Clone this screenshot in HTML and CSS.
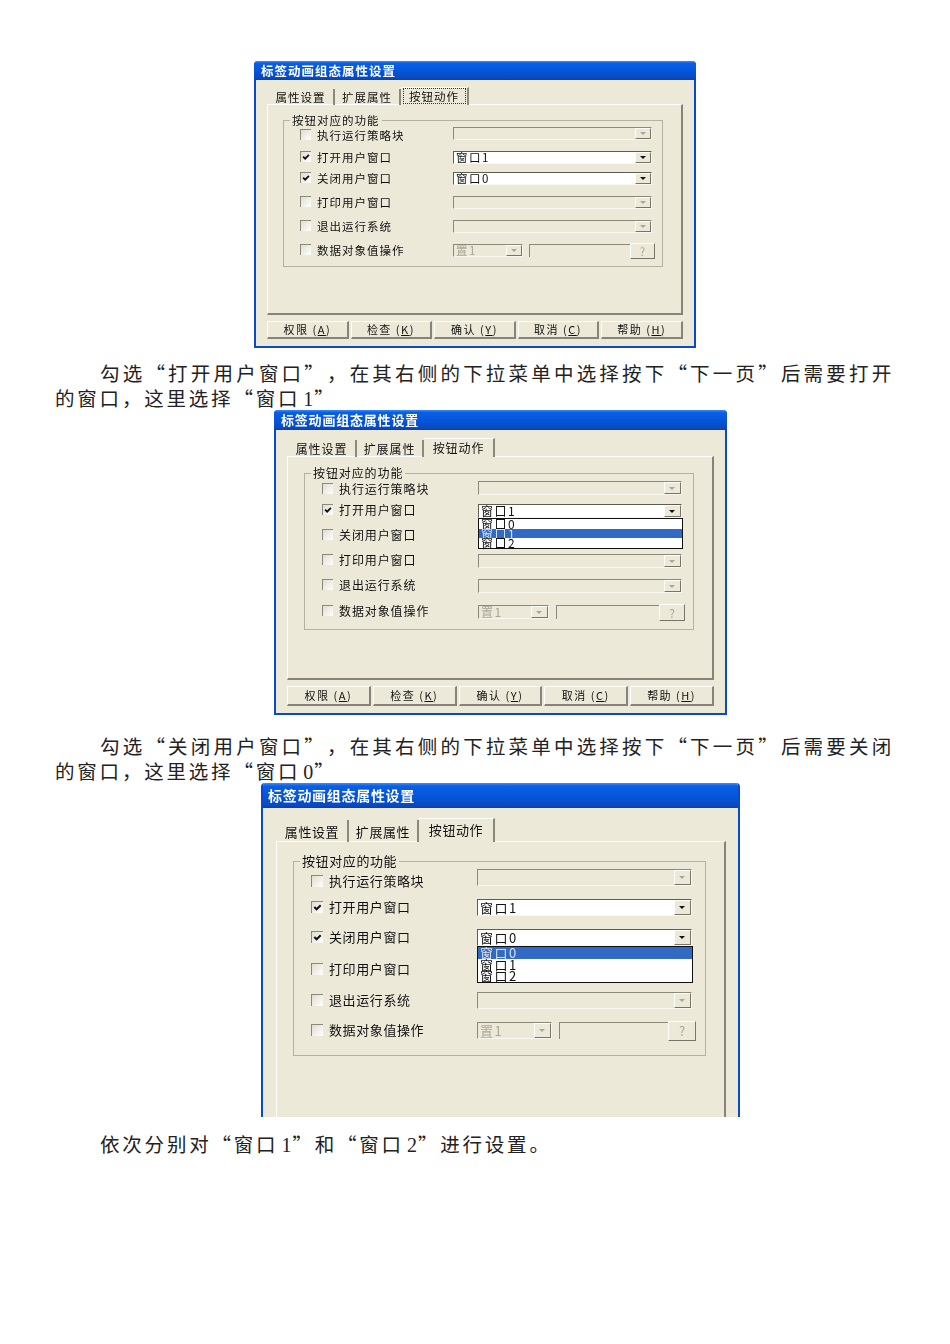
FILE: index.html
```html
<!DOCTYPE html>
<html lang="zh-CN">
<head>
<meta charset="utf-8">
<title>标签动画组态属性设置</title>
<link rel="stylesheet" href="styles.css">
</head>
<body>
<main class="page">

<section class="dialog d1">
  <div class="title">标签动画组态属性设置</div>
  <div class="tabs">
    <div class="tab">属性设置</div>
    <div class="tab">扩展属性</div>
    <div class="tab active"><span class="focus">按钮动作</span></div>
  </div>
  <div class="panel">
    <div class="group">
      <div class="legend">按钮对应的功能</div>
      <div class="row"><div class="opt"><span class="cb"></span>执行运行策略块</div><div class="combo off"><span class="val"></span><span class="arrow"></span></div></div>
      <div class="row"><div class="opt"><span class="cb"><svg viewBox="0 0 12 12"><path d="M2.5 5.5 5 8l4.5-4.5" /></svg></span>打开用户窗口</div><div class="combo"><span class="val">窗口1</span><span class="arrow"></span></div></div>
      <div class="row"><div class="opt"><span class="cb"><svg viewBox="0 0 12 12"><path d="M2.5 5.5 5 8l4.5-4.5" /></svg></span>关闭用户窗口</div><div class="combo"><span class="val">窗口0</span><span class="arrow"></span></div></div>
      <div class="row"><div class="opt"><span class="cb"></span>打印用户窗口</div><div class="combo off"><span class="val"></span><span class="arrow"></span></div></div>
      <div class="row"><div class="opt"><span class="cb"></span>退出运行系统</div><div class="combo off"><span class="val"></span><span class="arrow"></span></div></div>
      <div class="row"><div class="opt"><span class="cb"></span>数据对象值操作</div><div class="combo off short"><span class="val">置1</span><span class="arrow"></span></div><div class="field"></div><div class="qbtn">?</div></div>
    </div>
  </div>
  <div class="buttons">
    <div class="btn">权限 (<u>A</u>)</div>
    <div class="btn">检查 (<u>K</u>)</div>
    <div class="btn">确认 (<u>Y</u>)</div>
    <div class="btn">取消 (<u>C</u>)</div>
    <div class="btn">帮助 (<u>H</u>)</div>
  </div>
</section>

<p class="para p1">勾选“打开用户窗口”，在其右侧的下拉菜单中选择按下“下一页”后需要打开的窗口，这里选择“窗口<span class="num"> 1</span>”</p>

<section class="dialog d2">
  <div class="title">标签动画组态属性设置</div>
  <div class="tabs">
    <div class="tab">属性设置</div>
    <div class="tab">扩展属性</div>
    <div class="tab active">按钮动作</div>
  </div>
  <div class="panel">
    <div class="group">
      <div class="legend">按钮对应的功能</div>
      <div class="row"><div class="opt"><span class="cb"></span>执行运行策略块</div><div class="combo off"><span class="val"></span><span class="arrow"></span></div></div>
      <div class="row"><div class="opt"><span class="cb"><svg viewBox="0 0 12 12"><path d="M2.5 5.5 5 8l4.5-4.5" /></svg></span>打开用户窗口</div><div class="combo"><span class="val">窗口1</span><span class="arrow"></span>
        <div class="list"><div>窗口0</div><div class="sel">窗口1</div><div>窗口2</div></div></div></div>
      <div class="row"><div class="opt"><span class="cb"></span>关闭用户窗口</div><div class="combo off"><span class="val"></span><span class="arrow"></span></div></div>
      <div class="row"><div class="opt"><span class="cb"></span>打印用户窗口</div><div class="combo off"><span class="val"></span><span class="arrow"></span></div></div>
      <div class="row"><div class="opt"><span class="cb"></span>退出运行系统</div><div class="combo off"><span class="val"></span><span class="arrow"></span></div></div>
      <div class="row"><div class="opt"><span class="cb"></span>数据对象值操作</div><div class="combo off short"><span class="val">置1</span><span class="arrow"></span></div><div class="field"></div><div class="qbtn">?</div></div>
    </div>
  </div>
  <div class="buttons">
    <div class="btn">权限 (<u>A</u>)</div>
    <div class="btn">检查 (<u>K</u>)</div>
    <div class="btn">确认 (<u>Y</u>)</div>
    <div class="btn">取消 (<u>C</u>)</div>
    <div class="btn">帮助 (<u>H</u>)</div>
  </div>
</section>

<p class="para p2">勾选“关闭用户窗口”，在其右侧的下拉菜单中选择按下“下一页”后需要关闭的窗口，这里选择“窗口<span class="num"> 0</span>”</p>

<section class="dialog d3">
  <div class="title">标签动画组态属性设置</div>
  <div class="tabs">
    <div class="tab">属性设置</div>
    <div class="tab">扩展属性</div>
    <div class="tab active">按钮动作</div>
  </div>
  <div class="panel">
    <div class="group">
      <div class="legend">按钮对应的功能</div>
      <div class="row"><div class="opt"><span class="cb"></span>执行运行策略块</div><div class="combo off"><span class="val"></span><span class="arrow"></span></div></div>
      <div class="row"><div class="opt"><span class="cb"><svg viewBox="0 0 12 12"><path d="M2.5 5.5 5 8l4.5-4.5" /></svg></span>打开用户窗口</div><div class="combo"><span class="val">窗口1</span><span class="arrow"></span></div></div>
      <div class="row"><div class="opt"><span class="cb"><svg viewBox="0 0 12 12"><path d="M2.5 5.5 5 8l4.5-4.5" /></svg></span>关闭用户窗口</div><div class="combo"><span class="val">窗口0</span><span class="arrow"></span>
        <div class="list"><div class="sel">窗口0</div><div>窗口1</div><div>窗口2</div></div></div></div>
      <div class="row"><div class="opt"><span class="cb"></span>打印用户窗口</div><div class="combo off"><span class="val"></span><span class="arrow"></span></div></div>
      <div class="row"><div class="opt"><span class="cb"></span>退出运行系统</div><div class="combo off"><span class="val"></span><span class="arrow"></span></div></div>
      <div class="row"><div class="opt"><span class="cb"></span>数据对象值操作</div><div class="combo off short"><span class="val">置1</span><span class="arrow"></span></div><div class="field"></div><div class="qbtn">?</div></div>
    </div>
  </div>
</section>

<p class="para p3">依次分别对“窗口<span class="num"> 1</span>”和“窗口<span class="num"> 2</span>”进行设置。</p>

</main>
</body>
</html>
```
FILE: styles.css
```css
* { box-sizing: border-box; }
html, body { margin: 0; background: #fff; }
.page {
  padding: 61px 56px 187px 55px;
  font-family: "Noto Sans CJK SC", sans-serif;
  color: #111;
}
.para {
  margin: 0;
  font-size: 19.5px;
  line-height: 24.5px;
  letter-spacing: 2.8px;
  text-align: justify;
  text-indent: 45px;
  text-spacing-trim: space-all;
  color: #222;
}
.num {
  font-family: "Liberation Serif", serif;
  font-size: 20px;
  line-height: 0;
  letter-spacing: 1px;
  word-spacing: -3px;
}
.p1 { margin-top: 13px; }
.p2 { margin-top: 19px; }
.p3 { margin-top: 15px; }

/* Per-dialog metrics */
.d1 {
  --w: 442px; --title: 19px; --pad: 11px; --padr: 11px; --fs: 11.5px; --ls: 1px; --tfs: 12.5px; --tls: 1px;
  --tabtop: 7px; --tabh: 17px; --panelh: 211px; --tab1: 67px; --tab2: 66px; --tab3: 68px;
  --gl: 15px; --gt: 15px; --gr: 18px; --gh: 147px; --gpt: 6px; --gpl: 16px;
  --rows: 24px 21px 24px 24px 24px 17px; --ch: 13px; --opt: 153px; --combo: 199px;
  --short: 70px; --gap: 6px; --input: 101px; --qb: 25px; --cb: 11px; --arrow: 16px;
  --item: 9.5px; --btnh: 18px; --btop: 6px; --bottom: 7px; --bfs: 11px;
  --lift: -1px; --first: 1px;
  margin-left: 199px;
}
.d2 {
  --w: 453px; --title: 20px; --pad: 11px; --padr: 11px; --fs: 12px; --ls: .9px; --tfs: 13px; --tls: .8px;
  --tabtop: 8px; --tabh: 18px; --panelh: 224px; --tab1: 69px; --tab2: 67px; --tab3: 71px;
  --gl: 16px; --gt: 16px; --gr: 18px; --gh: 157px; --gpt: 7px; --gpl: 17px;
  --rows: 23px 25px 25px 25px 26px 17px; --ch: 14px; --opt: 156px; --combo: 204px;
  --short: 71px; --gap: 7px; --input: 103px; --qb: 26px; --cb: 11px; --arrow: 17px;
  --item: 9.5px; --btnh: 20px; --btop: 6px; --bottom: 7px; --bfs: 11px;
  --lift: -2px; --first: 0px;
  margin-left: 219px;
}
.d3 {
  --w: 479px; --title: 25px; --pad: 13px; --padr: 12px; --fs: 13px; --ls: .6px; --tfs: 14px; --tls: .7px;
  --tabtop: 10px; --tabh: 23px; --panelh: 300px; --tab1: 72px; --tab2: 70px; --tab3: 76px;
  --gl: 16px; --gt: 19px; --gr: 18px; --gh: 195px; --gpt: 7px; --gpl: 17px;
  --rows: 30px 30px 32px 31px 30px 20px; --ch: 17px; --opt: 166px; --combo: 215px;
  --short: 75px; --gap: 7px; --input: 109px; --qb: 28px; --cb: 12px; --arrow: 17px;
  --item: 11.5px; --btnh: 20px; --btop: 6px; --bottom: 0px; --bfs: 11px;
  --lift: -1px; --first: 3px;
  margin-left: 206px;
}

.dialog {
  width: var(--w);
  background: #ece9d8;
  border: 2px solid #0a49c8;
  border-top: 0;
  border-radius: 4px 4px 0 0;
  padding-bottom: var(--bottom);
  filter: blur(0.4px);
}
.dialog.d3 {
  height: 334px;
  overflow: hidden;
  border-bottom: 0;
}
.title {
  height: var(--title);
  margin: 0 -2px;
  padding-left: 7px;
  border-radius: 4px 4px 0 0;
  background: linear-gradient(#3d8cf5 0, #0a5fe6 12%, #0455d8 55%, #0a49c0 90%, #0a3fa8 100%);
  color: #fff;
  font-size: var(--tfs);
  font-weight: 700;
  letter-spacing: var(--tls);
  line-height: var(--title);
  white-space: nowrap;
}
.tabs {
  display: flex;
  align-items: flex-end;
  height: var(--tabh);
  margin: var(--tabtop) var(--padr) 0 var(--pad);
  padding-left: 1px;
  font-size: var(--fs);
  letter-spacing: var(--ls);
}
.tab {
  display: flex;
  align-items: center;
  justify-content: center;
  height: calc(var(--tabh) - 1px);
  margin-bottom: -1px;
  border-right: 2px solid #8b897c;
  white-space: nowrap;
}
.tab:nth-child(1) { width: var(--tab1); }
.tab:nth-child(2) { width: var(--tab2); }
.tab:nth-child(3) { width: var(--tab3); }
.tab.active {
  position: relative;
  height: calc(var(--tabh) + 1px);
  border-top: 1px solid #fff;
  background: #ece9d8;
  padding-bottom: 2px;
}
.focus {
  display: block;
  width: 63px;
  height: 16px;
  border: 1px dotted #333;
  line-height: 14px;
  text-align: center;
}
.panel {
  height: var(--panelh);
  margin: 0 var(--padr) 0 var(--pad);
  padding: var(--gt) var(--gr) 0 var(--gl);
  border: 1px solid #fff;
  border-right: 2px solid #85837a;
  border-bottom: 2px solid #85837a;
}
.group {
  position: relative;
  display: grid;
  grid-template-rows: var(--rows);
  height: var(--gh);
  padding: var(--gpt) 0 0 var(--gpl);
  border: 1px solid #b4b1a0;
  font-size: var(--fs);
  letter-spacing: var(--ls);
}
.legend {
  position: absolute;
  top: -8px;
  left: 6px;
  padding: 0 2px;
  background: #ece9d8;
  line-height: 14px;
  white-space: nowrap;
}
.row {
  display: flex;
  align-items: flex-start;
  height: var(--ch);
}
.opt {
  display: flex;
  align-items: center;
  gap: 6px;
  flex: none;
  width: var(--opt);
  height: var(--ch);
  margin-top: var(--lift);
  white-space: nowrap;
}
.row:nth-child(2) .opt { margin-top: var(--first); }
.cb {
  flex: none;
  display: block;
  width: var(--cb);
  height: var(--cb);
  border-top: 1px solid #8b897c;
  border-left: 1px solid #8b897c;
  background: linear-gradient(135deg, #e0ddcf, #fff);
}
.cb svg { display: block; width: 100%; height: 100%; }
.cb path { fill: none; stroke: #111; stroke-width: 2.2; }
.combo {
  position: relative;
  flex: none;
  display: flex;
  width: var(--combo);
  height: var(--ch);
  background: #fff;
  border-top: 1px solid #5f5d52;
  border-left: 1px solid #5f5d52;
  border-bottom: 1px solid #f8f7f0;
  border-right: 1px solid #f8f7f0;
  letter-spacing: 1.5px;
}
.combo.off { background: #ece9d8; color: #a8a698; border-top-color: #8b897c; border-left-color: #8b897c; }
.combo.short { width: var(--short); }
.val {
  flex: 1;
  padding-left: 2px;
  line-height: calc(var(--ch) - 2px);
  white-space: nowrap;
}
.arrow {
  position: relative;
  flex: none;
  width: var(--arrow);
  background: #ece9d8;
  border-right: 1px solid #77756a;
  border-bottom: 1px solid #77756a;
  border-top: 1px solid #fff;
  border-left: 1px solid #fff;
}
.arrow::after {
  content: "";
  position: absolute;
  top: calc(50% - 1.5px);
  left: calc(50% - 3.5px);
  border: 3.5px solid transparent;
  border-top: 3.5px solid #111;
  border-bottom: 0;
}
.off .arrow::after { border-top-color: #a8a698; }
.field {
  flex: none;
  width: var(--input);
  height: var(--ch);
  margin-left: var(--gap);
  border-top: 1px solid #8b897c;
  border-left: 1px solid #8b897c;
}
.qbtn {
  flex: none;
  width: var(--qb);
  height: calc(var(--ch) + 3px);
  margin-top: -1px;
  border-top: 1px solid #fff;
  border-left: 1px solid #fff;
  border-right: 1px solid #77756a;
  border-bottom: 1px solid #77756a;
  color: #a8a698;
  text-align: center;
  line-height: calc(var(--ch) + 1px);
  letter-spacing: 0;
}
.list {
  position: absolute;
  z-index: 2;
  top: calc(100% + 1px);
  left: -1px;
  right: -2px;
  background: #fff;
  border: 1px solid #111;
  color: #111;
  line-height: var(--item);
}
.list div { height: var(--item); padding-left: 2px; white-space: nowrap; }
.list .sel { background: #316ac5; color: #d8e2f5; }
.buttons {
  display: flex;
  gap: 2px;
  margin: var(--btop) var(--padr) 0 var(--pad);
  font-size: var(--bfs);
  letter-spacing: 1.5px;
}
.btn {
  flex: 1;
  height: var(--btnh);
  border-top: 1px solid #fff;
  border-left: 1px solid #fff;
  border-right: 2px solid #85837a;
  border-bottom: 2px solid #85837a;
  text-align: center;
  line-height: calc(var(--btnh) - 3px);
  white-space: nowrap;
}
```
